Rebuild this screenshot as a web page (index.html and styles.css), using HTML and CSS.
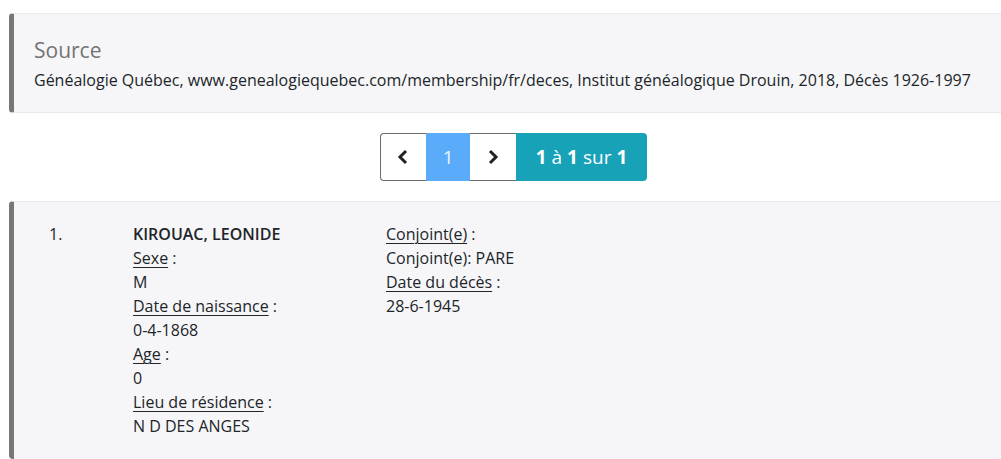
FILE: index.html
```html
<!DOCTYPE html>
<html lang="fr">
<head>
  <meta charset="UTF-8">
  <title>Décès</title>
  <link rel="stylesheet" href="styles.css">
</head>
<body>
  <div class="page">
    <div class="source">
      <h4 class="source_title">Source</h4>
      <p class="source_text">Généalogie Québec, www.genealogiequebec.com/membership/fr/deces, Institut généalogique Drouin, 2018, Décès 1926-1997</p>
    </div>

    <div class="pager">
      <div class="pager_group">
        <a class="pager_btn" href="#">
          <svg width="14" height="16" viewBox="0 0 14 16"><path d="M10 2 L4 8 L10 14" fill="none" stroke="#222" stroke-width="3"/></svg>
        </a>
        <a class="pager_btn active" href="#">1</a>
        <a class="pager_btn" href="#">
          <svg width="14" height="16" viewBox="0 0 14 16"><path d="M4 2 L10 8 L4 14" fill="none" stroke="#222" stroke-width="3"/></svg>
        </a>
        <span class="pager_count"><b>1</b> à <b>1</b> sur <b>1</b></span>
      </div>
    </div>

    <div class="record">
      <div class="record_num">1.</div>
      <div class="record_col first">
        <div class="name">KIROUAC, LEONIDE</div>
        <div><span class="lbl">Sexe</span> :</div>
        <div>M</div>
        <div><span class="lbl">Date de naissance</span> :</div>
        <div>0-4-1868</div>
        <div><span class="lbl">Age</span> :</div>
        <div>0</div>
        <div><span class="lbl">Lieu de résidence</span> :</div>
        <div>N D DES ANGES</div>
      </div>
      <div class="record_col">
        <div><span class="lbl">Conjoint(e)</span> :</div>
        <div>Conjoint(e): PARE</div>
        <div><span class="lbl">Date du décès</span> :</div>
        <div>28-6-1945</div>
      </div>
    </div>
  </div>
</body>
</html>
```

FILE: styles.css
```css
*,*:before,*:after{
  box-sizing: border-box;
  margin: 0;
  padding: 0;
}
body{
  background: #fff;
  font-family: "Open Sans", Arial, sans-serif;
  font-size: 16px;
  line-height: 24px;
  color: #212529;
  overflow: hidden;
}
.page{
  padding: 13px 0 0 9px;
  width: 1010px;
}
.source{
  background: #f6f6f8;
  border-left: 5px solid #777;
  border-top: 1px solid #e9e9ec;
  border-bottom: 1px solid #e9e9ec;
  border-radius: 4px 0 0 4px;
  padding: 22px 20px 18px 20px;
  height: 100px;
}
.source_title{
  font-weight: normal;
  font-size: 21px;
  line-height: 28px;
  color: #737373;
  margin-bottom: 4px;
}
.source_text{
  line-height: 24px;
}
.pager{
  display: flex;
  justify-content: center;
  padding: 20px 0 20px 8px;
}
.pager_group{
  display: flex;
  height: 48px;
}
.pager_btn{
  display: flex;
  align-items: center;
  justify-content: center;
  width: 46px;
  border: 1px solid #6c6c6c;
  border-right: none;
  text-decoration: none;
  color: #eaf4ff;
  font-size: 19px;
  background: #fff;
}
.pager_btn:first-child{
  border-radius: 4px 0 0 4px;
}
.pager_btn.active{
  width: 44px;
  background: #5aabfa;
  border-color: #5aabfa;
}
.pager_btn.active + .pager_btn{
  border-left: none;
}
.pager_count{
  display: flex;
  align-items: center;
  padding: 0 20px;
  background: #17a2b8;
  color: #fff;
  font-size: 19px;
  border-radius: 0 4px 4px 0;
}
.pager_count b{
  font-weight: bold;
  margin: 0 5px;
}
.pager_count b:first-child{
  margin-left: 0;
}
.pager_count b:last-child{
  margin-right: 0;
}
.record{
  display: flex;
  background: #f6f6f8;
  border-left: 5px solid #777;
  border-top: 1px solid #e9e9ec;
  border-radius: 4px 0 0 4px;
  padding: 20px 0 20px 35px;
  height: 258px;
}
.record_num{
  width: 84px;
}
.record_col.first{
  width: 253px;
}
.name{
  font-weight: 600;
}
.lbl{
  text-decoration: underline;
  text-underline-offset: 3px;
  text-decoration-thickness: 1px;
}
```
